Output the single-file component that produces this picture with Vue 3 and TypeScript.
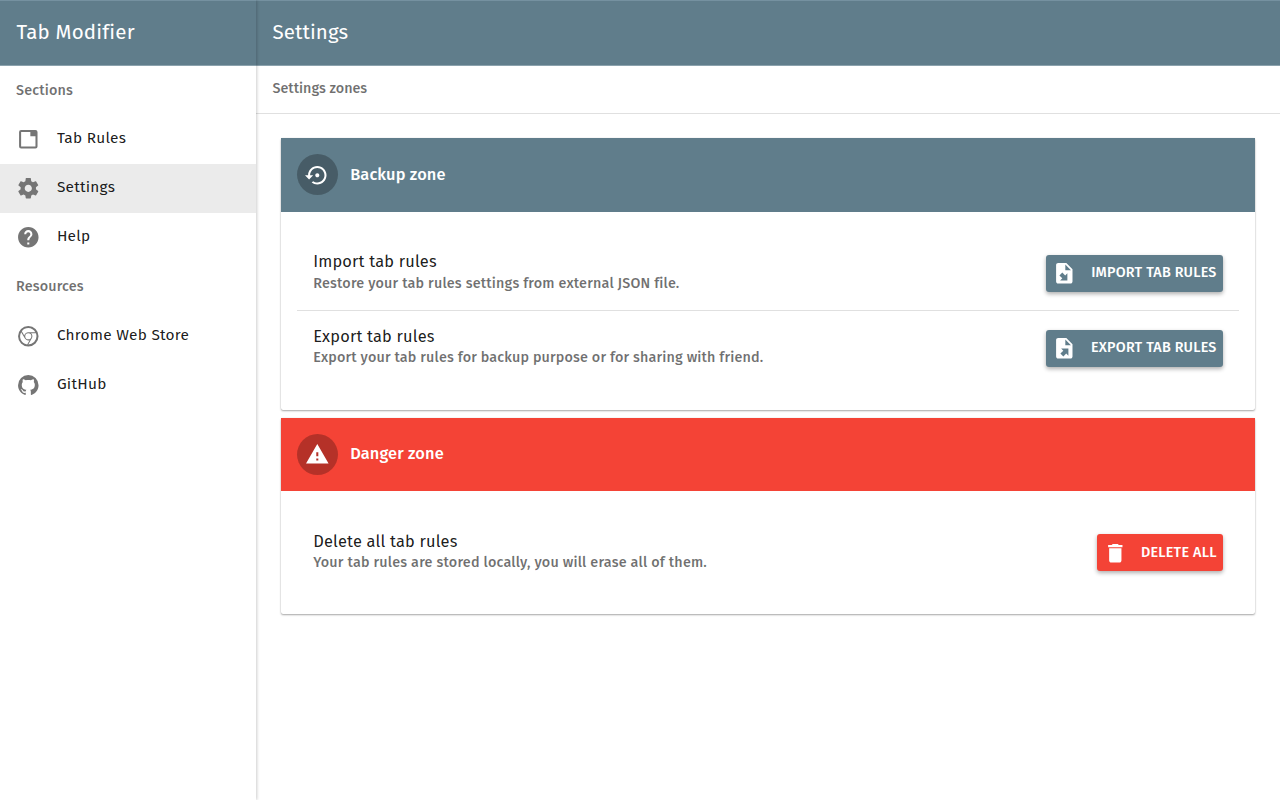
<script setup lang="ts">
interface NavItem { label: string; icon: string; active?: boolean; key: string }
interface NavGroup { title: string; key: string; items: NavItem[] }
interface ZoneRow { key: string; title: string; text: string; action: string; icon: string }
interface Zone { key: string; title: string; icon: string; rows: ZoneRow[] }

const groups: NavGroup[] = [
  {
    title: 'Sections',
    key: 'sections',
    items: [
      { label: 'Tab Rules', key: 'rules', icon: 'M19,19H5V5H14V9H19M19,3H5A2,2 0 0,0 3,5V19A2,2 0 0,0 5,21H19A2,2 0 0,0 21,19V5A2,2 0 0,0 19,3Z' },
      { label: 'Settings', key: 'settings', active: true, icon: 'M19.43 12.98c.04-.32.07-.64.07-.98s-.03-.66-.07-.98l2.11-1.65c.19-.15.24-.42.12-.64l-2-3.46c-.12-.22-.39-.3-.61-.22l-2.49 1c-.52-.4-1.08-.73-1.69-.98l-.38-2.65C14.46 2.18 14.25 2 14 2h-4c-.25 0-.46.18-.49.42l-.38 2.65c-.61.25-1.17.59-1.69.98l-2.49-1c-.23-.09-.49 0-.61.22l-2 3.46c-.13.22-.07.49.12.64l2.11 1.65c-.04.32-.07.65-.07.98s.03.66.07.98l-2.11 1.65c-.19.15-.24.42-.12.64l2 3.46c.12.22.39.3.61.22l2.49-1c.52.4 1.08.73 1.69.98l.38 2.65c.03.24.24.42.49.42h4c.25 0 .46-.18.49-.42l.38-2.65c.61-.25 1.17-.59 1.69-.98l2.49 1c.23.09.49 0 .61-.22l2-3.46c.12-.22.07-.49-.12-.64l-2.11-1.65zM12 15.5c-1.93 0-3.5-1.57-3.5-3.5s1.57-3.5 3.5-3.5 3.5 1.57 3.5 3.5-1.57 3.5-3.5 3.5z' },
      { label: 'Help', key: 'help', icon: 'M12 2C6.48 2 2 6.48 2 12s4.48 10 10 10 10-4.48 10-10S17.52 2 12 2zm1 17h-2v-2h2v2zm2.07-7.75l-.9.92C13.45 12.9 13 13.5 13 15h-2v-.5c0-1.1.45-2.1 1.17-2.83l1.24-1.26c.37-.36.59-.86.59-1.41 0-1.1-.9-2-2-2s-2 .9-2 2H8c0-2.21 1.79-4 4-4s4 1.79 4 4c0 .88-.36 1.68-.93 2.25z' },
    ],
  },
  {
    title: 'Resources',
    key: 'resources',
    items: [
      { label: 'Chrome Web Store', key: 'chrome', icon: 'M12,20L15.46,14H15.45C15.79,13.4 16,12.73 16,12C16,10.8 15.46,9.73 14.62,9H19.41C19.79,9.93 20,10.94 20,12A8,8 0 0,1 12,20M4,12C4,10.54 4.39,9.18 5.07,8L8.54,14H8.55C9.24,15.19 10.5,16 12,16C12.45,16 12.88,15.91 13.29,15.77L10.89,19.91C7,19.37 4,16.04 4,12M15,12A3,3 0 0,1 12,15A3,3 0 0,1 9,12A3,3 0 0,1 12,9A3,3 0 0,1 15,12M12,4C14.96,4 17.54,5.61 18.92,8H12C10.06,8 8.45,9.38 8.08,11.21L5.7,7.08C7.16,5.21 9.44,4 12,4M12,2A10,10 0 0,0 2,12A10,10 0 0,0 12,22A10,10 0 0,0 22,12A10,10 0 0,0 12,2Z' },
      { label: 'GitHub', key: 'github', icon: 'M12,2A10,10 0 0,0 2,12C2,16.42 4.87,20.17 8.84,21.5C9.34,21.58 9.5,21.27 9.5,21C9.5,20.77 9.5,20.14 9.5,19.31C6.73,19.91 6.14,17.97 6.14,17.97C5.68,16.81 5.03,16.5 5.03,16.5C4.12,15.88 5.1,15.9 5.1,15.9C6.1,15.97 6.63,16.93 6.63,16.93C7.5,18.45 8.97,18 9.54,17.76C9.63,17.11 9.89,16.67 10.17,16.42C7.95,16.17 5.62,15.31 5.62,11.5C5.62,10.39 6,9.5 6.65,8.79C6.55,8.54 6.2,7.5 6.75,6.15C6.75,6.15 7.59,5.88 9.5,7.17C10.29,6.95 11.15,6.84 12,6.84C12.85,6.84 13.71,6.95 14.5,7.17C16.41,5.88 17.25,6.15 17.25,6.15C17.8,7.5 17.45,8.54 17.35,8.79C18,9.5 18.38,10.39 18.38,11.5C18.38,15.32 16.04,16.16 13.81,16.41C14.17,16.72 14.5,17.33 14.5,18.26C14.5,19.6 14.5,20.68 14.5,21C14.5,21.27 14.66,21.59 15.17,21.5C19.14,20.16 22,16.42 22,12A10,10 0 0,0 12,2Z' },
    ],
  },
]

const sheet = 'M14,2H6C4.89,2 4,2.9 4,4V20C4,21.11 4.89,22 6,22H18C19.11,22 20,21.11 20,20V8M13,9V3.5L18.5,9'

const zones: Zone[] = [
  {
    key: 'backup',
    title: 'Backup zone',
    icon: 'M14 12c0-1.1-.9-2-2-2s-2 .9-2 2 .9 2 2 2 2-.9 2-2zm-2-9c-4.97 0-9 4.03-9 9H0l4 4 4-4H5c0-3.87 3.13-7 7-7s7 3.13 7 7-3.13 7-7 7c-1.51 0-2.91-.49-4.06-1.3l-1.42 1.44C8.04 20.3 9.94 21 12 21c4.97 0 9-4.03 9-9s-4.03-9-9-9z',
    rows: [
      { key: 'import', title: 'Import tab rules', text: 'Restore your tab rules settings from external JSON file.', action: 'Import tab rules', icon: sheet + 'M10.05,11.22L12.88,14.05L15,11.93V19H7.93L10.05,16.88L7.22,14.05' },
      { key: 'export', title: 'Export tab rules', text: 'Export your tab rules for backup purpose or for sharing with friend.', action: 'Export tab rules', icon: sheet + 'M8.93,12.22H16V19.29L13.88,17.17L11.05,20L8.22,17.17L11.05,14.35' },
    ],
  },
  {
    key: 'danger',
    title: 'Danger zone',
    icon: 'M1 21h22L12 2 1 21zm12-3h-2v-2h2v2zm0-4h-2v-4h2v4z',
    rows: [
      { key: 'delete', title: 'Delete all tab rules', text: 'Your tab rules are stored locally, you will erase all of them.', action: 'Delete all', icon: 'M6 19c0 1.1.9 2 2 2h8c1.1 0 2-.9 2-2V7H6v12zM19 4h-3.5l-1-1h-5l-1 1H5v2h14V4z' },
    ],
  },
]
</script>

<template>
  <div class="app">
    <aside class="sidebar">
      <header class="toolbar"><h1 class="brand">Tab Modifier</h1></header>
      <nav v-for="group in groups" :key="group.key">
        <div class="subheader" :class="group.key">{{ group.title }}</div>
        <a v-for="item in group.items" :key="item.key" class="nav-item" :class="[item.key, { active: item.active }]">
          <svg class="icon" viewBox="0 0 24 24"><path fill-rule="evenodd" :d="item.icon" /></svg>
          <span>{{ item.label }}</span>
        </a>
      </nav>
    </aside>
    <main class="main">
      <header class="toolbar"><h2 class="page-title">Settings</h2></header>
      <div class="subbar">Settings zones</div>
      <div class="content">
        <section v-for="zone in zones" :key="zone.key" class="card" :class="zone.key">
          <header class="card-head">
            <span class="avatar"><svg class="icon" viewBox="0 0 24 24"><path :d="zone.icon" /></svg></span>
            <span class="card-title">{{ zone.title }}</span>
          </header>
          <div class="card-body">
            <div v-for="row in zone.rows" :key="row.key" class="row" :class="row.key">
              <div class="row-text">
                <div class="row-title">{{ row.title }}</div>
                <div class="row-desc">{{ row.text }}</div>
              </div>
              <button class="btn" type="button">
                <svg class="icon" viewBox="0 0 24 24"><path fill-rule="evenodd" :d="row.icon" /></svg>
                <span>{{ row.action }}</span>
              </button>
            </div>
          </div>
        </section>
      </div>
    </main>
  </div>
</template>

<style>
body { margin: 0; overflow: hidden; background: #fff; }
</style>

<style scoped>
.app {
  display: flex;
  height: 800px;
  font-family: "Fira Sans", "Noto Sans", "Open Sans", sans-serif;
  color: rgba(0, 0, 0, 0.9);
  background: #fff;
  white-space: nowrap;
}
.icon { width: 24.6px; height: 24.6px; fill: currentColor; flex: none; display: block; }
.sidebar {
  position: relative;
  z-index: 1;
  width: 256.3px;
  flex: none;
  background: #fff;
  box-shadow: 1px 0 3px rgba(0, 0, 0, 0.2);
}
.toolbar {
  box-sizing: border-box;
  height: 65.6px;
  padding: 0 16.4px 1px;
  display: flex;
  align-items: center;
  background: #607d8b;
  border-top: 1px solid #7591a0;
  border-bottom: 1px solid #8ba2ad;
  color: #fff;
}
.brand, .page-title { margin: 0; font-size: 20.5px; font-weight: 400; line-height: 28px; letter-spacing: 0.1px; }
.brand { letter-spacing: 0.2px; }
.subheader {
  height: 49.2px;
  line-height: 49px;
  padding-left: 16.1px;
  font-size: 14.35px;
  font-weight: 500;
  letter-spacing: 0.14px;
  color: rgba(0, 0, 0, 0.56);
}
.nav-item {
  height: 49.2px;
  display: flex;
  align-items: center;
  padding-left: 16.4px;
  gap: 15.9px;
  font-size: 15.4px;
  letter-spacing: 0.25px;
}
.nav-item .icon { color: #757575; }
.nav-item span { margin-top: -3px; }
.nav-item.active { background: #ebebeb; }
.main { flex: 1; min-width: 0; }
.main .toolbar { padding-left: 16.1px; }
.subbar {
  box-sizing: border-box;
  height: 48px;
  line-height: 46px;
  padding-left: 16.1px;
  border-bottom: 1px solid #e0e0e0;
  font-size: 14.35px;
  font-weight: 500;
  color: rgba(0, 0, 0, 0.56);
}
.content { padding: 24.6px 24.6px 0 24.3px; display: flex; flex-direction: column; gap: 8.2px; }
.card {
  border-radius: 2px;
  background: #fff;
  box-shadow: 0 1px 2px rgba(0, 0, 0, 0.34), 0 0 1px rgba(0, 0, 0, 0.18);
}
.card-head {
  height: 73.6px;
  display: flex;
  align-items: center;
  padding-left: 16.4px;
  gap: 12.2px;
  background: #607d8b;
  color: #fff;
}
.danger .card-head { background: #f44336; }
.avatar {
  width: 41px;
  height: 41px;
  border-radius: 50%;
  display: grid;
  place-items: center;
  background: rgba(0, 0, 0, 0.26);
}
.card-title { font-size: 16.4px; line-height: 24px; font-weight: 500; letter-spacing: 0.12px; }
.danger .card-title { margin-top: -1px; }
.card-body { padding: 24.6px 16.4px; }
.row {
  height: 73.8px;
  display: flex;
  align-items: center;
  justify-content: space-between;
  padding: 0 16.4px 0 16.2px;
}
.row + .row { border-top: 1px solid #e0e0e0; }
.row-text { margin-top: -2px; }
.row-title { font-size: 16.4px; line-height: 21px; letter-spacing: 0.18px; }
.row-desc { font-size: 14.35px; line-height: 21px; font-weight: 500; letter-spacing: 0.16px; color: rgba(0, 0, 0, 0.56); }
.import .row-title { line-height: 22px; }
.import .row-desc { letter-spacing: 0.19px; }
.delete .row-desc { letter-spacing: 0.21px; }
.export .row-text { margin-top: -3px; }
.btn {
  box-sizing: border-box;
  width: 177px;
  height: 37px;
  display: flex;
  align-items: center;
  justify-content: space-between;
  padding: 0 6px;
  border: 0;
  border-radius: 3px;
  background: #607d8b;
  color: #fff;
  font: 500 14.35px "Fira Sans", "Noto Sans", sans-serif;
  letter-spacing: 0.22px;
  text-transform: uppercase;
  box-shadow: 0 2px 4px rgba(0, 0, 0, 0.32);
}
.import .btn span, .export .btn span { margin-top: -1px; }
.delete .btn { width: 126px; background: #f44336; }
</style>
